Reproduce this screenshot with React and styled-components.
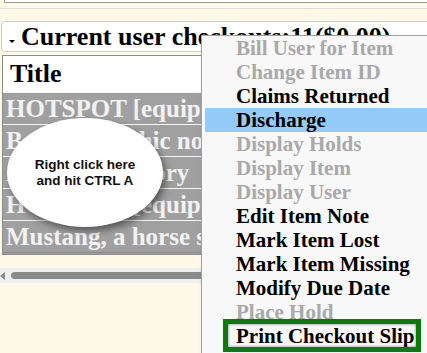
import React from "react";
import styled, { createGlobalStyle } from "styled-components";

const GlobalStyle = createGlobalStyle`
  html, body { margin: 0; padding: 0; }
  body {
    background: #fef8e6;
    overflow: hidden;
    font-family: "Liberation Serif", "Times New Roman", serif;
  }
`;

const Page = styled.div`
  position: relative;
  width: 427px;
  height: 353px;
  overflow: hidden;
`;

const TopPanel = styled.div`
  margin-left: 4px;
  width: 640px;
  height: 2px;
  background: #ffffff;
  border-left: 1px solid #9a9a9a;
  border-bottom: 1px solid #9a9a9a;
`;

const Rule = styled.div`
  margin-top: 5px;
  height: 1px;
  width: 640px;
  background: #dedede;
`;

const SectionHeader = styled.div`
  margin: 12px 0 0 1px;
  width: 640px;
  height: 31px;
  box-sizing: border-box;
  border: 1px solid #cfcfcf;
  border-radius: 4px;
  background: #ffffff;
  display: flex;
  align-items: center;
  gap: 6px;
  padding-left: 7px;
  white-space: nowrap;
`;

const Caret = styled.span`
  width: 0;
  height: 0;
  margin-top: 9px;
  border-left: 3px solid transparent;
  border-right: 3px solid transparent;
  border-top: 3px solid #000;
`;

const HeaderTitle = styled.span`
  font-weight: bold;
  font-size: 26px;
  color: #000;
  line-height: 28px;
`;

const Table = styled.div`
  margin: 3px 0 0 2px;
  width: 400px;
  border: 1px solid #8c8c8c;
  border-bottom: 3px double #8c8c8c;
  background: #a0a0a0;
`;

const HeadRow = styled.div`
  height: 36px;
  background: #ffffff;
  display: flex;
  align-items: center;
  padding-left: 7px;
  font-weight: bold;
  font-size: 26px;
  color: #000;
`;

const Row = styled.div`
  height: 31px;
  border-top: 1px solid #f4f4f4;
  display: flex;
  align-items: center;
  padding-left: 3px;
  font-weight: bold;
  font-size: 25px;
  color: #f2f2f2;
  white-space: nowrap;
  overflow: hidden;
`;

const ScrollTrack = styled.div`
  margin-top: 13px;
  width: 210px;
  height: 15px;
  background: #efefef;
  display: flex;
  align-items: center;
  gap: 6px;
`;

const ScrollArrow = styled.span`
  width: 0;
  height: 0;
  border-top: 4px solid transparent;
  border-bottom: 4px solid transparent;
  border-right: 5px solid #8a8a8a;
`;

const ScrollThumb = styled.span`
  flex: 1;
  height: 7px;
  border-radius: 4px;
  background: #8a8a8a;
`;

const Menu = styled.div`
  position: absolute;
  left: 201px;
  top: 35px;
  width: 250px;
  height: 340px;
  background: #f8f8f8;
  border-left: 1px solid #a0a0a0;
  border-top: 1px solid #a0a0a0;
  padding: 0 0 0 3px;
  box-shadow: 2px 2px 4px rgba(0,0,0,0.2);
`;

const MenuItem = styled.div`
  height: 24px;
  line-height: 24px;
  padding-left: 31px;
  font-weight: bold;
  font-size: 21px;
  white-space: nowrap;
  color: ${(p) => (p.$disabled ? "#a9a9a9" : "#000")};
  background: ${(p) => (p.$active ? "#94cbf8" : "transparent")};
`;

const Callout = styled.div`
  position: absolute;
  left: 7px;
  top: 118px;
  width: 156px;
  height: 109px;
  border-radius: 50%;
  background: #ffffff;
  box-shadow: 3px 4px 7px rgba(0,0,0,0.45);
  display: flex;
  align-items: center;
  justify-content: center;
  text-align: center;
  font-family: "Liberation Sans", Arial, sans-serif;
  font-weight: bold;
  font-size: 13.5px;
  line-height: 16px;
  color: #111;
`;

const Highlight = styled.div`
  position: absolute;
  left: 223px;
  top: 319px;
  width: 198px;
  height: 33px;
  box-sizing: border-box;
  border: 5px solid #0b7c0b;
  box-shadow: inset 0 0 3px rgba(0,0,0,0.5);
`;

const rows = [
  "HOTSPOT [equipment]",
  "Beasts: graphic novel",
  "A natural history",
  "HOTSPOT [equipment]",
  "Mustang, a horse story",
];

const items = [
  { t: "Bill User for Item", d: true },
  { t: "Change Item ID", d: true },
  { t: "Claims Returned" },
  { t: "Discharge", a: true },
  { t: "Display Holds", d: true },
  { t: "Display Item", d: true },
  { t: "Display User", d: true },
  { t: "Edit Item Note" },
  { t: "Mark Item Lost" },
  { t: "Mark Item Missing" },
  { t: "Modify Due Date" },
  { t: "Place Hold", d: true },
  { t: "Print Checkout Slip" },
];

export default function App() {
  return (
    <Page>
      <GlobalStyle />
      <TopPanel />
      <Rule />
      <SectionHeader>
        <Caret />
        <HeaderTitle>Current user checkouts:11($0.00)</HeaderTitle>
      </SectionHeader>
      <Table>
        <HeadRow>Title</HeadRow>
        {rows.map((r, i) => (
          <Row key={i}>{r}</Row>
        ))}
      </Table>
      <ScrollTrack>
        <ScrollArrow />
        <ScrollThumb />
      </ScrollTrack>
      <Callout>
        Right click here
        <br />
        and hit CTRL A
      </Callout>
      <Menu>
        {items.map((it) => (
          <MenuItem key={it.t} $disabled={it.d} $active={it.a}>
            {it.t}
          </MenuItem>
        ))}
      </Menu>
      <Highlight />
    </Page>
  );
}
